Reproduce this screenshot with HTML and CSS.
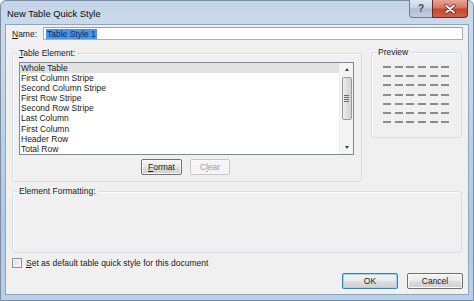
FILE: index.html
```html
<!DOCTYPE html>
<html>
<head>
<meta charset="utf-8">
<link rel="stylesheet" href="styles.css">
</head>
<body>
<div class="window">
  <div class="titlebar">
    <span class="title">New Table Quick Style</span>
    <div class="caption-btns">
      <div class="cap-help">?</div>
      <div class="cap-close">
        <svg width="12" height="10" viewBox="0 0 12 10"><path d="M2 1.5 L10 8.5 M10 1.5 L2 8.5" stroke="#5a2020" stroke-width="3.2" stroke-linecap="round"/><path d="M2 1.5 L10 8.5 M10 1.5 L2 8.5" stroke="#ffffff" stroke-width="1.8" stroke-linecap="round"/></svg>
      </div>
    </div>
  </div>
  <div class="client">
    <div class="name-row">
      <span class="name-label"><u>N</u>ame:</span>
      <div class="textbox"><span class="sel">Table Style 1</span></div>
    </div>
    <div class="main-row">
      <div class="group group-elements">
        <span class="legend"><u>T</u>able Element:</span>
        <div class="listbox">
          <div class="items">
            <div class="item selected">Whole Table</div>
            <div class="item">First Column Stripe</div>
            <div class="item">Second Column Stripe</div>
            <div class="item">First Row Stripe</div>
            <div class="item">Second Row Stripe</div>
            <div class="item">Last Column</div>
            <div class="item">First Column</div>
            <div class="item">Header Row</div>
            <div class="item">Total Row</div>
          </div>
          <div class="scrollbar">
            <div class="arrow up"></div>
            <div class="thumb"><span></span><span></span><span></span><span></span></div>
            <div class="track"></div>
            <div class="arrow down"></div>
          </div>
        </div>
        <div class="list-buttons">
          <div class="btn btn-format"><u>F</u>ormat</div>
          <div class="btn btn-disabled">C<u>l</u>ear</div>
        </div>
      </div>
      <div class="group group-preview">
        <span class="legend">Preview</span>
        <div class="dashes">
          <i></i><i></i><i></i><i></i><i></i><i></i>
          <i></i><i></i><i></i><i></i><i></i><i></i>
          <i></i><i></i><i></i><i></i><i></i><i></i>
          <i></i><i></i><i></i><i></i><i></i><i></i>
          <i></i><i></i><i></i><i></i><i></i><i></i>
          <i></i><i></i><i></i><i></i><i></i><i></i>
          <i></i><i></i><i></i><i></i><i></i><i></i>
        </div>
      </div>
    </div>
    <div class="group group-format">
      <span class="legend">Element Formatting:</span>
    </div>
    <div class="check-row">
      <div class="checkbox"></div>
      <span class="check-label"><u>S</u>et as default table quick style for this document</span>
    </div>
    <div class="button-row">
      <div class="btn btn-ok">OK</div>
      <div class="btn btn-cancel">Cancel</div>
    </div>
  </div>
</div>
</body>
</html>
```

FILE: styles.css
```css
* { box-sizing: border-box; }
html, body { margin: 0; padding: 0; }
body {
  width: 474px;
  height: 301px;
  overflow: hidden;
  font-family: "Liberation Sans", Arial, sans-serif;
  font-size: 8.5px;
  color: #1a1a1a;
}
.window {
  width: 474px;
  height: 301px;
  background: linear-gradient(180deg, #c4d5e8 0px, #cbdaea 24px, #bed3ea 120px, #aec9e7 220px, #b8d0e9 301px);
  border: 1px solid #7c8ea3;
  border-radius: 6px 6px 0 0;
  display: flex;
  flex-direction: column;
}
.titlebar {
  height: 23px;
  display: flex;
  justify-content: space-between;
  align-items: flex-start;
  flex: none;
}
.title {
  font-size: 9.4px;
  color: #0b0b0b;
  margin: 7px 0 0 6px;
}
.caption-btns {
  display: flex;
  margin-right: 5px;
  margin-top: -1px;
}
.cap-help {
  width: 23px;
  height: 18px;
  border: 1px solid #6d7f96;
  border-top: none;
  border-right: none;
  border-radius: 0 0 0 4px;
  background: linear-gradient(180deg, #dfe7f0 0%, #c6d3e2 45%, #aebfd3 55%, #c2d1e2 100%);
  color: #3a4a60;
  font-size: 10px;
  font-weight: bold;
  text-align: center;
  line-height: 17px;
}
.cap-close {
  width: 36px;
  height: 18px;
  border: 1px solid #6b2a2a;
  border-top: none;
  border-radius: 0 0 4px 0;
  background: linear-gradient(180deg, #e8a596 0%, #d8755f 45%, #c5452d 55%, #d2624a 100%);
  display: flex;
  align-items: center;
  justify-content: center;
}
.client {
  margin-left: 4px;
  width: 464px;
  height: 271px;
  background: #f0f0f0;
  border: 1px solid #8ea5bf;
  flex: none;
  display: flex;
  flex-direction: column;
}
.name-row {
  display: flex;
  align-items: center;
  margin-top: 2px;
  height: 13px;
}
.name-label {
  margin-left: 6px;
  width: 31px;
}
.textbox {
  width: 420px;
  height: 13px;
  background: #ffffff;
  border: 1px solid #abadb3;
  border-top-color: #9aa0aa;
  display: flex;
  align-items: center;
  padding-left: 2px;
}
.sel {
  background: #4a95e8;
  color: #0e2a58;
  padding: 0 1px;
  line-height: 10px;
}
.main-row {
  display: flex;
  align-items: flex-start;
  margin-left: 6px;
  margin-top: 12px;
}
.group {
  position: relative;
  border: 1px solid #d8dde3;
  border-radius: 3px;
  box-shadow: inset 1px 1px 0 #ffffff;
}
.legend {
  position: absolute;
  top: -6px;
  left: 4px;
  background: #f0f0f0;
  padding: 0 2px;
  line-height: 10px;
  white-space: nowrap;
}
.group-elements {
  width: 350px;
  height: 129px;
  margin-top: 1px;
  padding: 8px 7px 0 6px;
  display: flex;
  flex-direction: column;
}
.listbox {
  height: 93px;
  border: 1px solid #828790;
  background: #ffffff;
  display: flex;
}
.items {
  flex: 1;
}
.item {
  height: 10.1px;
  line-height: 10.1px;
  padding-left: 1px;
  font-size: 8.5px;
  white-space: nowrap;
}
.item.selected {
  background: #e2e2e2;
}
.scrollbar {
  width: 14px;
  display: flex;
  flex-direction: column;
  align-items: center;
  background: #f4f4f4;
  border-left: 1px solid #f0f0f0;
}
.arrow {
  width: 0;
  height: 0;
  border-left: 2.5px solid transparent;
  border-right: 2.5px solid transparent;
  flex: none;
}
.arrow.up {
  border-bottom: 3px solid #404040;
  margin-top: 5px;
}
.arrow.down {
  border-top: 3px solid #404040;
  margin-bottom: 5px;
}
.thumb {
  width: 10px;
  height: 43px;
  margin-top: 6px;
  border: 1px solid #9a9a9a;
  border-radius: 2px;
  background: linear-gradient(90deg, #eeeeee, #dedede 50%, #d2d2d2);
  display: flex;
  flex-direction: column;
  align-items: center;
  justify-content: center;
  gap: 1px;
}
.thumb span {
  width: 5px;
  height: 1px;
  background: #6a6a6a;
}
.track { flex: 1; }
.list-buttons {
  display: flex;
  justify-content: center;
  gap: 8px;
  margin-top: 4px;
  padding-right: 2px;
}
.btn {
  height: 16px;
  border: 1px solid #707070;
  border-radius: 2px;
  background: linear-gradient(180deg, #f4f4f4 0%, #ebebeb 45%, #dddddd 55%, #cfcfcf 100%);
  display: flex;
  align-items: center;
  justify-content: center;
  box-shadow: inset 0 0 0 1px #fbfbfb;
}
.btn-format { width: 41px; }
.btn-disabled {
  width: 40px;
  color: #a0a0a0;
  border-color: #c4c4c4;
  background: #f4f4f4;
}
.group-preview {
  width: 91px;
  height: 86px;
  margin-left: 9px;
  padding: 13px 0 0 11px;
}
.dashes {
  display: grid;
  grid-template-columns: repeat(6, 8px);
  grid-auto-rows: 2px;
  column-gap: 3.7px;
  row-gap: 7.2px;
}
.dashes i {
  display: block;
  background: #8c8c8c;
}
.group-format {
  margin-left: 6px;
  margin-top: 9px;
  width: 450px;
  height: 62px;
}
.check-row {
  display: flex;
  align-items: center;
  margin-top: 5px;
  margin-left: 6px;
  height: 10px;
}
.checkbox {
  width: 10px;
  height: 10px;
  border: 1px solid #8e8f8f;
  background: linear-gradient(135deg, #dcdcdc, #f6f6f6);
  box-shadow: inset 0 0 0 1px #f4f4f4;
}
.check-label {
  margin-left: 4px;
}
.button-row {
  display: flex;
  justify-content: flex-end;
  gap: 9px;
  margin-top: 5px;
  margin-right: 5px;
}
.btn-ok {
  width: 56px;
  border-color: #3c7fb1;
  box-shadow: inset 0 0 0 1px #9fd4f3;
}
.btn-cancel { width: 56px; }
```
